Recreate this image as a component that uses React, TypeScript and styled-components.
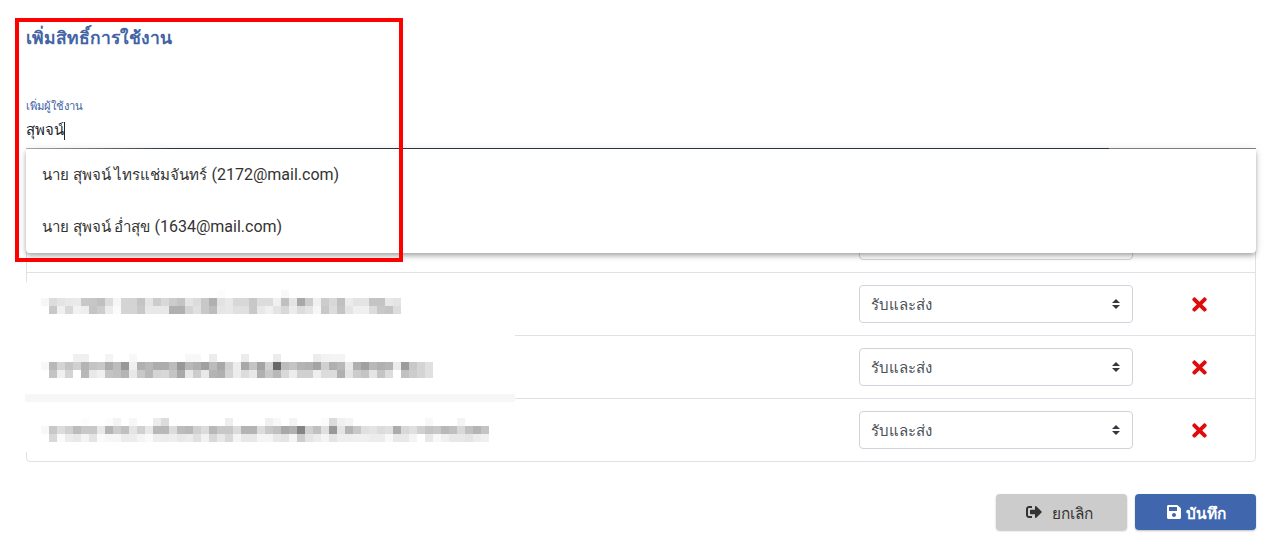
import { createGlobalStyle, styled } from "styled-components";
import { FaSave, FaSignOutAlt, FaTimes } from "react-icons/fa";

const users = [
  { name: "นาย สุพจน์ ไทรแช่มจันทร์", email: "(2172@mail.com)" },
  { name: "นาย สุพจน์ อ่ำสุข", email: "(1634@mail.com)" },
];

// pixelated name strips: [y, first cell index, greys as hex pairs]
const mosaic: [number, number, string][] = [
  [290, 22, "fc"],
  [290, 30, "f8"],
  [298, 0, "f6dce4e8eac8c6c0dcf6d4d4c4e4ccd8ccc4e4dcc8b0e2e8d8d8c8dcdcf0c0e4a8ccf0ccd8c0ece4e4c4c4e8e4"],
  [306, 0, "ffc8f0d8f2eec4ccecfbd4d4c8e8e8e8b0b0d4e0c8bce6e8e0e0c8e8f0e4d8ecdce4f6c8dcc4e4f0f0dcc8c4dc"],
  [354, 4, "f0f0"],
  [354, 8, "f4"],
  [354, 11, "f8"],
  [354, 18, "f8f8"],
  [354, 21, "ec"],
  [354, 25, "ec"],
  [354, 29, "ec"],
  [354, 34, "ecf2f4f4"],
  [362, 0, "f8b8d4c4d0b4c4c8acbc98f0b0b8acacbc98b8b0a0bca8d0eca8c4a4d068bcc4b4b0a4d0b0b8e8b0a0b8b0b4ec9cc8d4e0"],
  [370, 0, "ffc4f0d4ffb8e8f0c4c0b4e8c8b8d4d8c4a8e8cce8b4b0d4ecdce8b0c8b8d8ecd0d0eedcdcb0e4ccc4e4c4dcffc0ccd4e0"],
  [418, 5, "fc"],
  [418, 8, "fcf4"],
  [418, 11, "f6"],
  [418, 14, "ecdc"],
  [418, 23, "ee"],
  [418, 28, "f0f8"],
  [418, 31, "f4"],
  [418, 35, "fbdcf0f4"],
  [418, 48, "f8"],
  [418, 52, "f4"],
  [426, 0, "f8c8dcd0bcc8c8e8b4ccc0e4d0e8b8b8dcbcb8d0dcb8c8c8dcb4b4dcc8c0a8b084d0c0e098e4b4c8e0e4dce0acd8e0d0c4c8b8c0d8c0b4c4"],
  [434, 0, "ffd8faece8f4e4faf6f6ececf4faeeeceee8ece0f2d8e8d8f4e8e8f4f4e8e4f4cce4ecf4e4eeeef0f0ececf8e8e8f4ffe8f8f0e8e8e4ecf0"],
];

function Redaction() {
  return (
    <Patch width={490} height={170} viewBox="25 282 490 170" shapeRendering="crispEdges">
      <rect x={25} y={282} width={490} height={170} fill="#fff" />
      <rect x={25} y={394} width={490} height={8} fill="#f7f7f7" />
      {mosaic.map(([y, start, greys]) =>
        (greys.match(/../g) ?? []).map((grey, i) => (
          <rect
            key={`${y}-${start + i}`}
            x={41 + (start + i) * 8}
            y={y}
            width={8}
            height={8}
            fill={`#${grey}${grey}${grey}`}
          />
        ))
      )}
    </Patch>
  );
}

function App() {
  return (
    <>
      <GlobalStyle />
      <Page>
        <Title>เพิ่มสิทธิ์การใช้งาน</Title>

        <Field>
          <FieldLabel>เพิ่มผู้ใช้งาน</FieldLabel>
          <FieldValue>
            สุพจน์
            <Caret />
          </FieldValue>
          <Underline />
          <Suggestions>
            {users.map((user) => (
              <Suggestion key={user.email}>
                <ThaiName>{user.name}</ThaiName> {user.email}
              </Suggestion>
            ))}
          </Suggestions>
        </Field>

        <Table>
          {[0, 1, 2, 3].map((row) => (
            <Row key={row}>
              <RoleSelect defaultValue="both">
                <option value="both">รับและส่ง</option>
              </RoleSelect>
              <RemoveCell>
                <FaTimes />
              </RemoveCell>
            </Row>
          ))}
          <Redaction />
        </Table>

        <Actions>
          <CancelButton>
            <FaSignOutAlt />
            ยกเลิก
          </CancelButton>
          <SaveButton>
            <FaSave />
            บันทึก
          </SaveButton>
        </Actions>

        <Highlight />
      </Page>
    </>
  );
}

export default App;

const GlobalStyle = createGlobalStyle`
  * {
    box-sizing: border-box;
  }

  body {
    margin: 0;
    background: #fff;
    font-family: Roboto, "Noto Sans", "Liberation Sans", sans-serif;
    color: #212529;
  }
`;

const Page = styled.div`
  position: relative;
  height: 552px;
  padding: 0 10px 0 26px;
  overflow: hidden;
`;

const Title = styled.h1`
  height: 97px;
  margin: 0;
  padding-top: 27px;
  font-size: 17.5px;
  line-height: 22px;
  font-weight: 700;
  color: #4264a4;
`;

const Field = styled.div`
  position: relative;
  height: 52px;
`;

const FieldLabel = styled.div`
  height: 18px;
  padding-top: 1px;
  font-size: 11.25px;
  line-height: 18px;
  color: #4264a4;
`;

const FieldValue = styled.div`
  display: flex;
  align-items: center;
  height: 33px;
  padding-bottom: 3px;
  font-size: 15px;
  color: #212529;
`;

const Caret = styled.span`
  width: 1px;
  height: 18px;
  margin-top: 1px;
  background: #212529;
`;

const Underline = styled.div`
  height: 1px;
  background: linear-gradient(
    to right,
    #b0b0b0 0,
    #2d3a44 147px,
    #2d3a44 1083px,
    #868686 1083px
  );
`;

const Suggestions = styled.div`
  position: absolute;
  z-index: 2;
  top: 52px;
  left: 0;
  right: 0;
  height: 104px;
  background: #fff;
  border-radius: 0 0 4px 4px;
  box-shadow: 0 2px 4px -1px rgba(0, 0, 0, 0.2), 0 4px 5px 0 rgba(0, 0, 0, 0.14),
    0 1px 10px 0 rgba(0, 0, 0, 0.12);
`;

const Suggestion = styled.div`
  height: 52px;
  padding: 16px 0 0 16px;
  font-size: 16px;
  line-height: 20px;
  white-space: pre;
  color: #333;
`;

const ThaiName = styled.span`
  font-size: 15.1px;
`;

const Table = styled.div`
  position: relative;
  margin-top: 60px;
  border: 1px solid #dee2e6;
  border-radius: 4px;
`;

const Row = styled.div`
  display: flex;
  align-items: center;
  justify-content: flex-end;
  height: 62px;

  & + & {
    height: 63px;
    border-top: 1px solid #dee2e6;
  }
`;

const RoleSelect = styled.select`
  width: 274px;
  height: 38px;
  padding: 2px 28px 0 11px;
  appearance: none;
  border: 1px solid #ced4da;
  border-radius: 4px;
  background: #fff
    url("data:image/svg+xml,%3csvg xmlns='http://www.w3.org/2000/svg' width='8' height='10'%3e%3cpath fill='%23343a40' d='M4 0L0 4h8zM4 10L0 6h8z'/%3e%3c/svg%3e")
    no-repeat right 12px center;
  font-family: inherit;
  font-size: 15px;
  color: #495057;
`;

const RemoveCell = styled.div`
  display: flex;
  align-items: center;
  justify-content: center;
  width: 122px;
  padding-left: 11px;
  font-size: 21px;
  color: #e00b0b;
`;

const Patch = styled.svg`
  position: absolute;
  z-index: 1;
  top: 72px;
  left: -2px;
`;

const Actions = styled.div`
  display: flex;
  justify-content: flex-end;
  gap: 8px;
  margin-top: 32px;
`;

const CancelButton = styled.button`
  display: flex;
  align-items: center;
  justify-content: center;
  gap: 10px;
  width: 131px;
  height: 36px;
  padding: 2px 5px 0 0;
  border: 0;
  border-radius: 4px;
  background: #cccccc;
  box-shadow: 0 1px 2px rgba(0, 0, 0, 0.25);
  font-family: inherit;
  font-size: 15.4px;
  color: #333;

  svg {
    width: 16px;
    height: 16px;
    margin-top: -2px;
  }
`;

const SaveButton = styled(CancelButton)`
  gap: 4px;
  width: 121px;
  padding-right: 0;
  background: #4066ae;
  font-weight: 700;
  color: #fff;
`;

const Highlight = styled.div`
  position: absolute;
  z-index: 3;
  top: 18px;
  left: 15px;
  width: 388px;
  height: 244px;
  border: 4px solid #f00;
  pointer-events: none;
`;
